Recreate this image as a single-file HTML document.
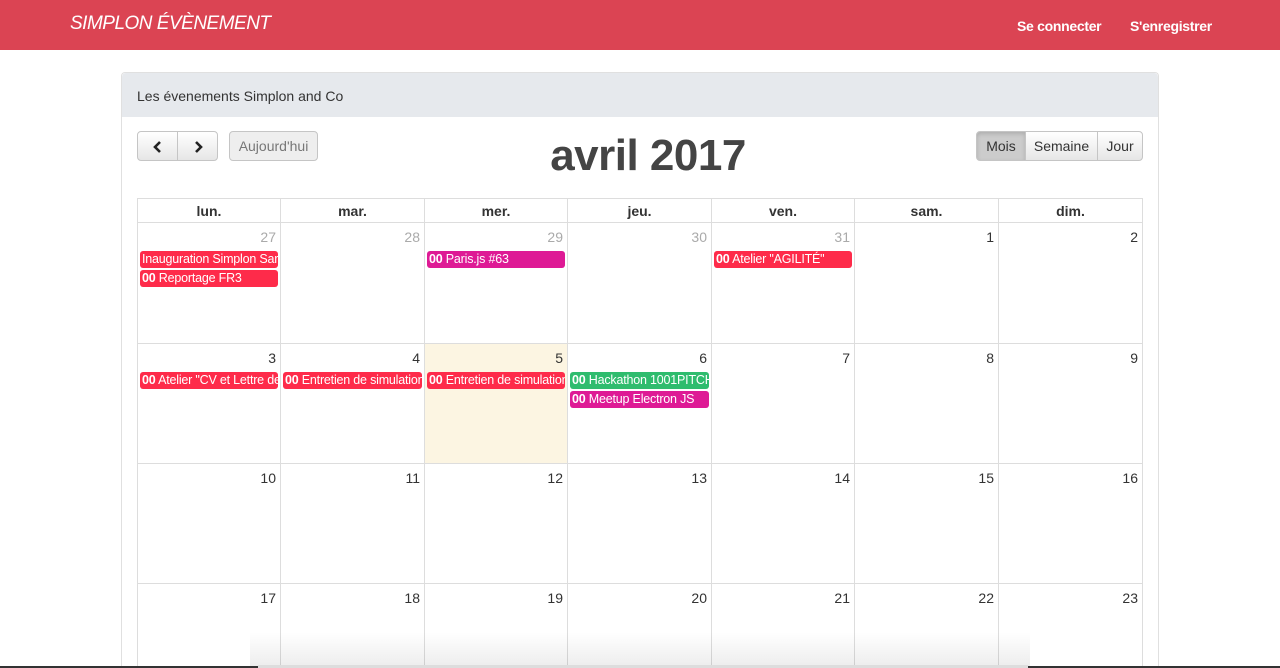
<!DOCTYPE html>
<html><head><meta charset="utf-8"><style>
*{box-sizing:border-box;margin:0;padding:0}
html,body{width:1280px;height:668px;overflow:hidden}
body{background:#fff;font-family:"Liberation Sans",Helvetica,Arial,sans-serif;color:#333;position:relative}
.nav{position:absolute;left:0;top:0;width:1280px;height:50px;background:#db4453}
.brand{position:absolute;left:70px;top:13px;color:#fff;font-size:19px;font-style:italic;letter-spacing:-0.5px}
.nl{position:absolute;top:18px;color:#fff;font-size:14px;font-weight:bold;letter-spacing:-0.3px}
.panel{position:absolute;left:121px;top:72px;width:1038px;height:596px;border:1px solid #e0e0e0;border-bottom:none;border-radius:4px 4px 0 0;background:#fff}
.ph{height:44px;background:#e6e9ed;padding:15px 15px;font-size:14px;color:#333;border-radius:4px 4px 0 0}
.btn{position:absolute;height:30px;border:1px solid #c5c5c5;background:linear-gradient(#fff,#e6e6e6);font-size:14px;color:#333;text-align:center;line-height:28px}
.btn svg{margin-top:9px}
h2{position:absolute;left:0;width:1296px;top:131px;text-align:center;font-size:44px;font-weight:bold;color:#444;letter-spacing:-0.5px}
.grid{position:absolute;left:137px;top:198px;width:1006px;height:470px;overflow:hidden}
.hd{position:absolute;top:0;height:25px;font-size:14px;font-weight:bold;text-align:center;line-height:25px;border:1px solid #ddd}
.cell{position:absolute;border:1px solid #ddd}
.num{position:absolute;right:4px;top:6px;font-size:14px;color:#333}
.num.o{color:#aaa}
.ev{position:absolute;height:17px;font-size:12.5px;color:#fff;line-height:17px;padding-left:2px;white-space:nowrap;overflow:hidden;border-radius:3px;letter-spacing:-0.2px}
.ev b{font-weight:bold}
.r{background:#fe2b4a}.m{background:#de1a95}.g{background:#2fbc6e}
</style></head><body>
<div class="nav"><div class="brand">SIMPLON ÉVÈNEMENT</div><div class="nl" style="left:1017px">Se connecter</div><div class="nl" style="left:1130px">S'enregistrer</div></div>
<div class="panel"><div class="ph">Les évenements Simplon and Co</div></div>
<div class="btn" style="left:137px;top:131px;width:41px;border-radius:4px 0 0 4px"><svg width="10" height="12" viewBox="0 0 10 12"><path d="M7 1L2 6l5 5" stroke="#222" stroke-width="2.6" fill="none"/></svg></div>
<div class="btn" style="left:177px;top:131px;width:41px;border-radius:0 4px 4px 0"><svg width="10" height="12" viewBox="0 0 10 12"><path d="M3 1l5 5-5 5" stroke="#222" stroke-width="2.6" fill="none"/></svg></div>
<div class="btn" style="left:229px;top:131px;width:89px;border-radius:4px;color:#777;background:#eee">Aujourd'hui</div>
<div class="btn" style="left:976px;top:131px;width:50px;border-radius:4px 0 0 4px;background:#ccc;box-shadow:inset 0 2px 4px rgba(0,0,0,.15)">Mois</div>
<div class="btn" style="left:1025px;top:131px;width:73px">Semaine</div>
<div class="btn" style="left:1097px;top:131px;width:46px;border-radius:0 4px 4px 0">Jour</div>
<h2>avril 2017</h2>
<div class="grid" id="g"></div>
<script>
var g=document.getElementById('g'),xs=[0,143,287,430,574,717,861,1005],h=['lun.','mar.','mer.','jeu.','ven.','sam.','dim.'],s='';
for(var i=0;i<7;i++)s+='<div class="hd" style="left:'+xs[i]+'px;width:'+(xs[i+1]-xs[i]+1)+'px">'+h[i]+'</div>';
var ys=[24,145,265,385,505,469],n=[[27,28,29,30,31,1,2],[3,4,5,6,7,8,9],[10,11,12,13,14,15,16],[17,18,19,20,21,22,23]];
ys=[24,145,265,385,469];
for(var r=0;r<4;r++)for(var c=0;c<7;c++){var bg=(r==1&&c==2)?'background:#fcf5e2;':'';var hh=(r==3)?(470-385):(ys[r+1]-ys[r]+1);var bb=(r==3)?'border-bottom:none;':'';
s+='<div class="cell" style="'+bg+bb+'left:'+xs[c]+'px;top:'+ys[r]+'px;width:'+(xs[c+1]-xs[c]+1)+'px;height:'+hh+'px"><div class="num'+(r==0&&c<5?' o':'')+'">'+n[r][c]+'</div></div>';}
function e(c,y,cl,t){s+='<div class="ev '+cl+'" style="left:'+(xs[c]+3)+'px;top:'+y+'px;width:'+(xs[c+1]-xs[c]-5)+'px">'+t+'</div>';}
e(0,53,'r','Inauguration Simplon Sar');e(0,72,'r','<b>00</b> Reportage FR3');e(2,53,'m','<b>00</b> Paris.js #63');e(4,53,'r','<b>00</b> Atelier "AGILITÉ"');
e(0,174,'r','<b>00</b> Atelier "CV et Lettre de');e(1,174,'r','<b>00</b> Entretien de simulation');e(2,174,'r','<b>00</b> Entretien de simulation');e(3,174,'g','<b>00</b> Hackathon 1001PITCH');e(3,193,'m','<b>00</b> Meetup Electron JS');
g.innerHTML=s;
</script>
<div style="position:absolute;left:250px;top:632px;width:780px;height:34px;background:linear-gradient(rgba(255,255,255,0),rgba(0,0,0,.07))"></div>
<div style="position:absolute;left:0;top:666px;width:1280px;height:2px;background:#333"></div>
<div style="position:absolute;left:258px;top:665px;width:770px;height:3px;background:#ddd"></div>
</body></html>
